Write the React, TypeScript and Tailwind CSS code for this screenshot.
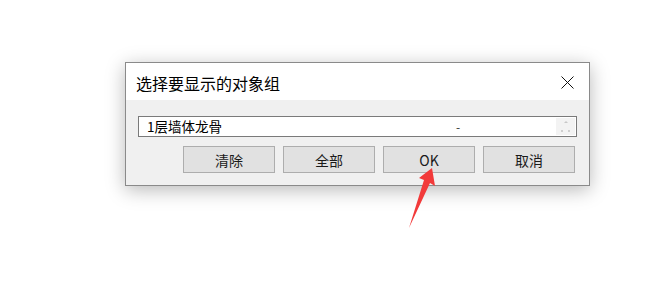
import React from "react";

const font = { fontFamily: '"Noto Sans CJK SC", "Noto Sans", sans-serif' };

const DialogButton: React.FC<{ label: string }> = ({ label }) => (
    <button className="w-[92px] h-[27px] bg-[#e1e1e1] border border-[#adadad] text-[14px] text-[#1a1a1a] leading-none flex items-center justify-center">
        {label}
    </button>
);

export default function App() {
    return (
        <div className="relative w-[659px] h-[287px] bg-white overflow-hidden" style={font}>
            <div className="pt-[62px] pl-[125px]">
                <div className="w-[465px] border border-[#8a8a8a] bg-[#f0f0f0] shadow-[0_4px_18px_rgba(0,0,0,0.28)]">
                    {/* title bar */}
                    <div className="h-[37px] bg-white flex items-center justify-between pl-[10px] pr-[15px]">
                        <span className="text-[16px] text-black leading-none pt-[2px]">选择要显示的对象组</span>
                        <svg width="13" height="13" viewBox="0 0 13 13" className="mt-[2px]">
                            <path d="M0.5 0.5 L12.5 12.5 M12.5 0.5 L0.5 12.5" stroke="#111" strokeWidth="1" />
                        </svg>
                    </div>
                    {/* body */}
                    <div className="px-[12px] pt-[16px] pb-[12px]">
                        <div className="h-[21px] bg-white border border-[#7a7a7a] flex items-center">
                            <span className="pl-[8px] text-[13.5px] text-black leading-none w-[317px]">1层墙体龙骨</span>
                            <span className="text-[12px] text-[#333] leading-none flex-1">-</span>
                            <div className="w-[19px] h-[17px] mr-[1px] bg-[#f3f3f3] flex flex-col items-center justify-between py-[3px]">
                                <div className="w-0 h-0 border-l-[2px] border-r-[2px] border-b-[2px] border-l-transparent border-r-transparent border-b-[#c8c8c8]" />
                                <div className="flex gap-[5px]">
                                    <div className="w-[2px] h-[2px] bg-[#cfcfcf]" />
                                    <div className="w-[2px] h-[2px] bg-[#cfcfcf]" />
                                </div>
                            </div>
                        </div>
                        <div className="mt-[9px] flex justify-end gap-[8px] pr-[2px]">
                            <DialogButton label="清除" />
                            <DialogButton label="全部" />
                            <DialogButton label="OK" />
                            <DialogButton label="取消" />
                        </div>
                    </div>
                </div>
            </div>
            {/* red annotation arrow */}
            <svg className="absolute left-0 top-0" width="659" height="287" viewBox="0 0 659 287">
                <polygon
                    points="432,168 435,186 430,183 409,228 424,180 419,178"
                    fill="#f23a3a"
                />
            </svg>
        </div>
    );
}
